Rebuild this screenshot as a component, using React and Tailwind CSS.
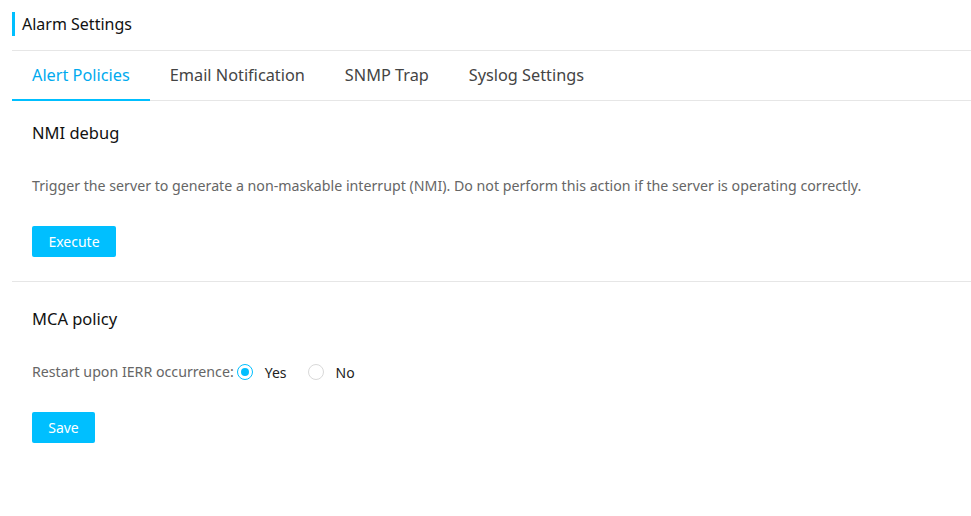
import React, { useState } from 'react';

const tabs = ['Alert Policies', 'Email Notification', 'SNMP Trap', 'Syslog Settings'];

function Radio({ checked, label, onClick }) {
  return (
    <label className="flex items-center cursor-pointer" onClick={onClick}>
      <span
        className={
          'w-[16px] h-[16px] rounded-full border flex items-center justify-center ' +
          (checked ? 'border-[#00bfff]' : 'border-[#d9d9d9]')
        }
      >
        {checked && <span className="w-[8px] h-[8px] rounded-full bg-[#00bfff]" />}
      </span>
      <span className="ml-[12px] text-[14px] text-[#222]">{label}</span>
    </label>
  );
}

export default function App() {
  const [active, setActive] = useState(0);
  const [restart, setRestart] = useState(true);

  return (
    <div
      className="w-[971px] h-[516px] bg-white overflow-hidden"
      style={{ fontFamily: '"Noto Sans", "Open Sans", sans-serif' }}
    >
      <div className="pl-[12px]">
        {/* page title */}
        <div className="h-[51px] flex items-center border-b border-[#e6e6e6]">
          <span className="w-[3px] h-[24px] bg-[#00bfff] mr-[7px] -mt-[2px]" />
          <span className="text-[16px] text-[#111] -mt-[2px]">Alarm Settings</span>
        </div>

        {/* tabs */}
        <div className="flex h-[50px] border-b border-[#e6e6e6]">
          {tabs.map((t, i) => (
            <button
              key={t}
              onClick={() => setActive(i)}
              className={
                'px-[20px] text-[16.3px] -mb-px border-b-2 ' +
                (active === i
                  ? 'text-[#00aaee] border-[#00bfff]'
                  : 'text-[#444] border-transparent')
              }
            >
              {t}
            </button>
          ))}
        </div>

        {/* NMI debug */}
        <div className="pl-[20px] pt-[20px] pb-[24px] border-b border-[#e6e6e6]">
          <h3 className="text-[16.5px] text-[#111] leading-[24px]">NMI debug</h3>
          <p className="mt-[31px] text-[14.2px] text-[#666] leading-[20px]">
            Trigger the server to generate a non-maskable interrupt (NMI). Do not perform this action if the server is operating correctly.
          </p>
          <button className="mt-[30px] w-[84px] h-[31px] rounded-[2px] bg-[#00bfff] text-white text-[14px]">
            Execute
          </button>
        </div>

        {/* MCA policy */}
        <div className="pl-[20px] pt-[25px]">
          <h3 className="text-[16.5px] text-[#111] leading-[24px]">MCA policy</h3>
          <div className="mt-[31px] flex items-center h-[20px]">
            <span className="text-[14.2px] text-[#666]">Restart upon IERR occurrence:</span>
            <div className="flex items-center gap-[21px] ml-[3px]">
              <Radio checked={restart} label="Yes" onClick={() => setRestart(true)} />
              <Radio checked={!restart} label="No" onClick={() => setRestart(false)} />
            </div>
          </div>
          <button className="mt-[30px] w-[63px] h-[31px] rounded-[2px] bg-[#00bfff] text-white text-[14px]">
            Save
          </button>
        </div>
      </div>
    </div>
  );
}
